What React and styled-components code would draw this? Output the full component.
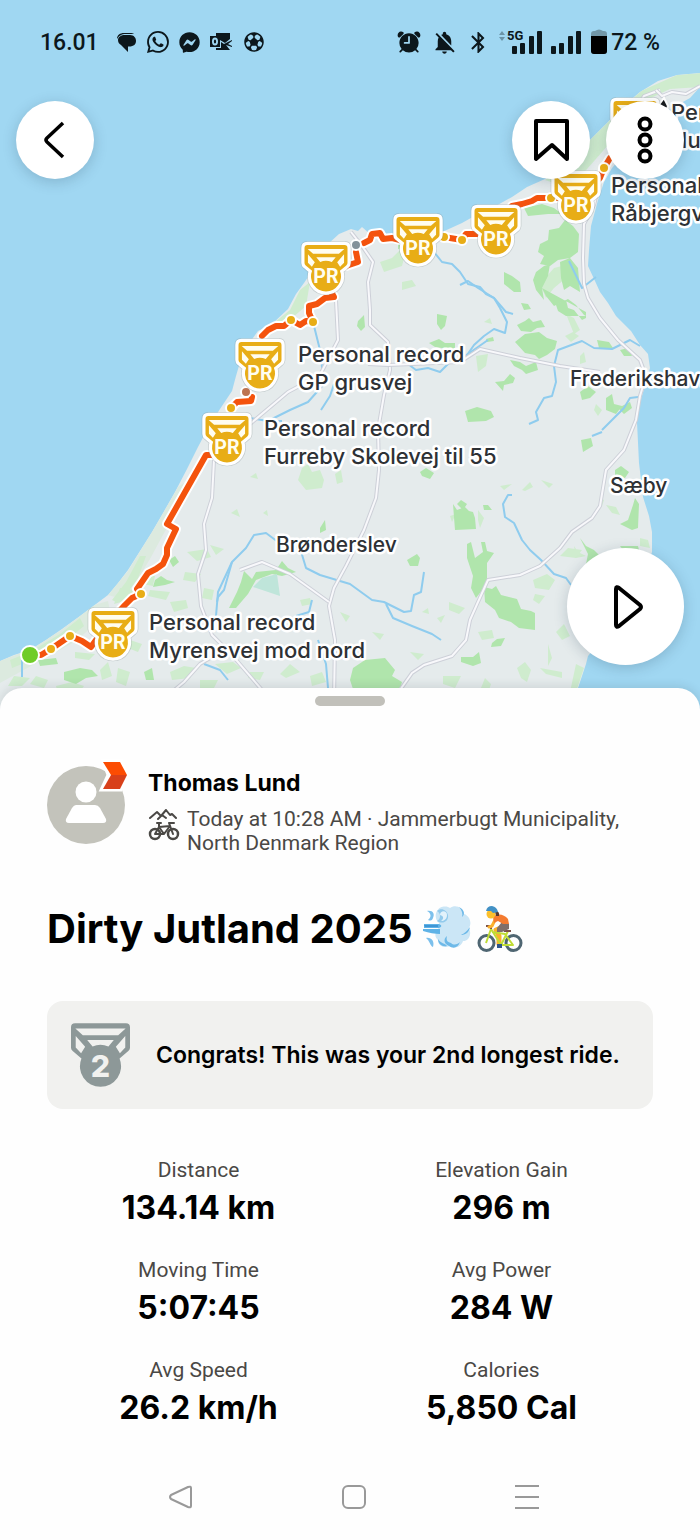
import React from "react";
import styled, { createGlobalStyle } from "styled-components";
import { BsWhatsapp } from "react-icons/bs";
import { FaFacebookMessenger } from "react-icons/fa";
import { IoFootball, IoAlarm } from "react-icons/io5";
import { MdNotificationsOff, MdBluetooth } from "react-icons/md";

const Global = createGlobalStyle`
  * { box-sizing: border-box; }
  body {
    margin: 0;
    background: #fefefe;
    color: #000;
    font-family: Inter, "Liberation Sans", sans-serif;
  }
  button { font: inherit; padding: 0; border: 0; cursor: pointer; }
  h1, h2, p, dl, dd { margin: 0; }
`;

/* ---------- map data ---------- */

const LAND =
  "M0 661 L14 655 L30 650 L46 640 L62 629 L80 616 L96 604 L108 595 L118 583 L128 570 L140 551 L152 532 L163 513 L175 492 L187 469 L198 447 L208 428 L220 409 L232 391 L236 376 L243 352 L258 331 L272 324 L288 309 L296 294 L304 283 L318 262 L328 244 L339 234 L351 229 L358 231 L362 227 L370 234 L384 236 L400 239 L440 233 L462 223 L478 214 L494 207 L512 197 L527 187 L545 179 L562 166 L590 140 L607 123 L622 107 L640 92 L658 81 L677 75 L700 73 L700 87 L690 98 L672 108 L650 122 L630 148 L612 168 L604 182 L598 200 L591 226 L589 250 L588 266 L595 281 L600 292 L608 303 L616 316 L631 331 L640 345 L648 354 L650 368 L645 386 L640 402 L637 422 L639 463 L643 497 L649 516 L652 532 L652 552 L640 590 L610 630 L588 656 L586 664 L578 688 L572 712 L0 712 Z";

const FORESTS = [
  "M549 230 l10 -2 l6 -8 l8 6 l6 8 l-1 18 l-8 6 l-12 2 l-8 6 l-10 -2 l4 -8 l-6 -4 l2 -8 l8 -4 z",
  "M536 272 l8 -6 l6 -2 l-2 12 l-6 12 l2 12 l-8 -10 l-3 -10 z",
  "M542 288 l4 8 l8 10 l4 -2 l8 -4 l2 8 l6 2 l8 10 l4 -2 l0 -6 z",
  "M556 305 l12 -6 l8 6 l8 10 l2 1 l-20 0 l-8 -5 z",
  "M560 262 l10 -4 l8 10 l2 24 l-10 -6 l-6 4 l-3 -12 z",
  "M504 272 l8 4 l8 6 l1 10 l-7 0 l-10 -8 z",
  "M521 303 l7 1 l3 5 l-7 1 z",
  "M517 325 l8 -4 l4 -3 l4 4 l8 -2 l4 7 l-8 1 l-6 4 l-10 -1 z",
  "M515 342 l10 -8 l14 -2 l8 6 l10 3 l-2 8 l-8 6 l-8 4 l-4 -4 l-10 -2 z",
  "M510 360 l10 2 l6 4 l10 -4 l2 8 l-12 4 l-4 -4 l-8 -4 z M486 339 l7 -2 l1 4 l-7 1 z",
  "M495 382 l9 -1 l6 -7 l5 4 l-2 5 l-9 2 l-1 6 z",
  "M465 411 l12 -4 l14 4 l3 6 l-8 4 l-18 1 z",
  "M597 340 l12 2 l4 6 l-14 0 z M620 350 l8 -2 l4 8 l-8 0 z",
  "M580 392 l8 -6 l8 6 l-6 6 l-8 2 z M606 398 l6 -4 l2 10 l8 2 l-6 8 l-10 -4 z M618 408 l12 -6 l2 6 l-8 6 z",
  "M524 208 l18 -4 l12 4 l8 6 l-14 0 l-20 2 z",
  "M398 243 l20 4 l-6 5 l-14 -3 z M358 321 l6 -6 l1 12 l-4 4 l-4 -5 z",
  "M437 314 l10 2 l-2 10 l-4 4 l-4 -6 z M429 343 l10 -4 l6 4 l10 0 l0 7 l-20 -3 z",
  "M453 504 l4 6 l8 -3 l4 4 l4 1 l2 6 l1 11 l-21 1 z M457 504 l4 -4 l6 4 l-4 6 z M483 505 l5 0 l4 5 l-8 0 z",
  "M467 544 l4 -2 l4 16 l8 -6 l-2 -10 l4 0 l2 9 l7 2 l-7 10 l0 16 l-4 10 l-7 9 l-5 -10 l2 -12 l-6 -18 z",
  "M484 587 l8 2 l4 -3 l5 9 l16 4 l4 10 l10 2 l4 2 l0 17 l-16 -2 l-8 -6 l-12 -4 l-4 -8 l-10 -8 z",
  "M580 538 l6 8 l8 4 l8 8 l-8 8 l-8 -2 l2 -10 z M620 546 l18 0 l2 8 l-14 0 z",
  "M633 505 l2 -7 l4 6 l-1 24 l-6 2 l-12 -6 l8 -4 z M615 470 l6 -4 l8 6 l-4 6 l-10 -2 z",
  "M353 668 l12 -8 l20 -2 l10 12 l-3 6 l10 6 l-2 8 l-46 2 l-4 -12 z",
  "M492 643 l5 -4 l8 -1 l-4 8 l-10 1 z M461 657 l12 0 l6 -5 l2 11 l-8 3 l-12 -4 z",
  "M244 571 l8 8 l4 -7 l20 -2 l6 -9 l6 7 l8 4 l-14 4 l-10 -2 l-16 6 l-8 14 l-12 14 l-7 0 l8 -16 l4 -10 z",
  "M320 528 l5 -8 l1 10 l-6 3 z M420 472 l6 -4 l8 5 l-4 6 l-8 -3 z",
  "M407 560 l10 -6 l3 4 l-2 8 l-8 0 z M581 440 l10 -2 l2 8 l-10 6 z",
  "M64 672 l16 -4 l12 2 l6 6 l-12 2 l-10 6 l-12 -4 z M38 660 l18 -2 l2 6 l-18 2 z",
  "M144 672 l8 -4 l2 12 l-8 0 z M169 560 l6 -4 l4 6 l-6 5 z M155 580 l6 -4 l6 4 l8 2 l-10 3 l-12 2 z",
];

const COAST_GRASS = [
  "M108 595 l20 -24 l34 -56 l16 -28 l6 -4 l-6 26 l-14 24 l-14 26 l-12 20 l-16 20 z",
  "M0 661 l26 -10 l34 -20 l34 -26 l14 -4 l2 10 l-34 30 l-36 20 l-40 22 z",
];

const MEADOWS = [
  "M112 600 l14 -18 l14 -26 l6 0 l-8 22 l-10 14 l-12 10 z M120 588 l14 2 l-6 10 l-14 4 z",
  "M256 338 l14 -12 l20 -16 l10 -20 l10 -8 l-4 24 l-14 12 l-12 8 l-10 2 z",
  "M10 660 l20 -8 l30 -18 l20 -16 l4 8 l-22 18 l-20 12 l-30 12 z",
  "M545 180 l18 -14 l44 -43 l34 -32 l36 -16 l23 -2 l0 14 l-30 2 l-30 14 l-30 40 l-30 34 l-20 8 z",
  "M540 284 l14 -16 l8 -2 l4 12 l-12 10 l-8 10 z M566 314 l8 4 l6 12 l-6 4 z M565 336 l8 -4 l6 4 l-8 6 z",
  "M380 262 l12 -4 l8 -8 l6 0 l-4 16 l-18 6 z M402 282 l10 -2 l4 6 l-14 4 z",
  "M476 356 l12 -2 l-2 12 l-8 6 z M484 322 l6 -4 l2 6 z M580 356 l4 -4 l2 10 l-6 2 z M596 404 l6 6 l-4 6 l-4 -6 z",
  "M298 480 l4 -12 l6 -4 l4 8 l8 -2 l4 10 l-2 8 l-16 2 z M335 474 l6 -4 l2 12 l-6 2 z M250 477 l6 -4 l2 6 z",
  "M231 513 l6 -4 l3 8 z M263 513 l4 -3 l1 6 z M187 552 l20 -3 l4 8 l-14 4 z M210 545 l14 4 l-8 6 z",
  "M522 490 l8 -8 l3 5 l-8 4 z M541 480 l12 4 l-4 4 z M500 486 l12 -2 l-8 6 z",
  "M533 580 l14 -6 l8 6 l-6 10 l-14 -2 z M535 594 l10 2 l-6 8 l-6 -4 z M560 556 l8 -8 l14 2 l-6 8 z",
  "M449 602 l16 6 l-6 6 l-10 -4 z M422 612 l6 -4 l1 6 z M437 618 l8 -3 l-4 8 z M478 632 l14 -2 l2 8 l-12 2 z",
  "M517 668 l8 -6 l6 8 l-4 12 l-6 -4 z M540 668 l22 4 l0 6 l-16 -4 z M556 632 l8 -8 l6 12 l-8 4 z",
  "M443 676 l18 0 l-6 12 l-12 -4 z M485 678 l6 6 l-2 6 l-8 -2 z M576 664 l8 4 l-8 24 l-6 0 z",
  "M606 505 l10 2 l4 8 l-8 -2 z M640 538 l8 2 l2 8 l-10 -2 z M604 500 l-4 -2 l2 8 z",
  "M145 574 l10 2 l-2 10 l-10 -2 z M150 590 l20 2 l-4 8 l-18 -4 z M185 572 l16 2 l-6 8 l-12 -2 z",
  "M100 670 l8 -8 l4 14 l-10 4 z M118 668 l12 4 l-4 14 l-10 -4 z M75 652 l20 2 l-6 6 l-14 -2 z",
  "M14 676 l16 2 l-8 8 l-14 0 z M36 676 l12 4 l-4 8 l-14 -4 z M56 686 l16 -4 l12 4 l-6 8 l-20 0 z",
  "M170 672 l14 -6 l12 2 l-6 10 l-18 2 z M215 664 l18 -2 l8 6 l-14 6 z M250 672 l14 0 l-4 8 l-12 -2 z",
  "M170 602 l16 -2 l2 8 l-14 4 z M204 588 l10 2 l-2 10 l-10 -2 z M290 664 l10 8 l-14 6 l-6 -4 z",
  "M340 612 l10 4 l-4 6 z M300 600 l10 -2 l2 6 l-10 2 z M372 632 l12 2 l-4 6 z M410 652 l14 2 l-6 6 z",
  "M130 640 l12 4 l-4 8 l-10 -4 z M200 680 l18 0 l-4 8 l-14 0 z M310 676 l12 -4 l4 10 l-14 4 z",
  "M574 546 l4 6 l8 4 l-10 2 z M478 510 l6 8 l-4 10 l-2 -8 z M456 514 l-4 8 l-2 -6 z M548 644 l4 14 l-4 8 z",
];

const RIVERS = [
  "M434 252 L442 262 L452 264 L460 272 L468 284 L480 287 L486 294 L494 298 L506 312 L513 314",
  "M460 285 L468 281 L478 288 L494 298 L500 308 L507 322 L505 333 L494 329 L484 336 L474 345 L465 358",
  "M408 364 L416 370 L428 368 L440 372 L452 360 L465 356 L488 340",
  "M569 261 L582 288 L596 277",
  "M529 424 L538 420 L536 412 L544 398 L552 396 L556 382 L554 366 L558 350 L582 341 L594 348 L612 349 L630 340 L640 346",
  "M602 430 L612 420 L624 408 L630 398 L638 397",
  "M592 436 L602 432",
  "M512 495 L508 495 L503 504 L505 517 L514 523 L522 540 L530 550 L541 560 L554 574 L566 578 L571 585",
  "M217 602 L218 597 L224 590 L232 562 L246 548 L254 535 L266 533 L278 542 L300 548 L306 568 L320 575 L350 584 L372 600 L384 602 L404 612 L411 611 L414 595 L421 592 L424 572",
  "M386 604 L393 618 L412 626 L432 634 L441 640",
  "M232 562 L218 592 L216 616",
  "M204 664 L220 670 L228 680",
  "M313 322 L320 350 L324 384 L308 402 L290 410 L268 421",
  "M321 410 L330 396 L334 384",
  "M312 600 L309 612 L296 616",
  "M318 640 L326 664 L329 700",
  "M22 660 L22 677",
  "M250 418 L268 421 L282 421",
];

const ROADS = [
  "M351 232 L362 246 L373 262 L368 282 L370 310 L370 325 L388 342 L390 370 L384 395 L378 430 L379 470 L376 498 L364 530 L346 566 L334 588 L329 606 L335 640 L334 700",
  "M332 262 L336 300 L338 340 L320 375 L288 392 L250 424 L214 460 L212 498 L204 524 L206 550 L198 574 L201 606 L212 635 L232 655 L262 690",
  "M368 364 L388 365 L460 362 L480 349 L520 358 L560 366 L600 372",
  "M660 90 L644 96 L630 118 L612 148 L600 180 L594 205 L584 224 L583 258 L584 284 L588 298 L600 318 L618 340 L640 360 L646 376 L640 396 L636 420 L624 450 L606 470 L600 506 L592 518 L572 532 L560 548 L540 566 L520 575 L488 580 L478 602 L470 620 L466 640 L452 656 L424 665 L412 673 L400 690",
  "M329 602 L290 574 L262 562 L240 570",
  "M700 86 L686 94 L672 92 L662 96 L656 90",
  "M172 692 L184 682 L200 664 L220 652",
];

const ROUTE = [
  "M30 655 L41 655 L51 649 L70 636 L82 641 L91 647 L96 640 L113 618 L125 605 L132 598 L141 594 L137 589 L148 573 L156 569 L163 564 L167 555 L167 548 L176 529 L167 524 L206 455 L214 455",
  "M231 408 L237 402 L251 401 L252 397",
  "M262 336 L268 330 L276 326 L284 326 L291 320 L300 325 L306 321 L313 322 L309 313 L309 306 L317 304 L325 298 L334 297 L330 290",
  "M346 266 L358 262 L356 252",
  "M364 243 L370 240 L372 234 L380 233 L383 239 L392 238 L400 240 L412 240",
  "M444 237 L462 240 L466 234 L482 234",
  "M512 206 L522 204 L532 201 L537 198 L551 198 L560 198",
  "M590 188 L600 178 L604 168 L610 158",
];

const CHECKPOINTS = [
  { x: 51, y: 649 }, { x: 70, y: 636 }, { x: 141, y: 594 }, { x: 231, y: 408 },
  { x: 291, y: 320 }, { x: 313, y: 322 }, { x: 444, y: 237 }, { x: 462, y: 240 },
  { x: 551, y: 198 }, { x: 604, y: 168 },
  { x: 246, y: 392, tone: "#bd7350" }, { x: 356, y: 245, tone: "#83929a" },
];

const RECORD_PINS = [
  [635, 101], [576, 174], [496, 208], [418, 217], [326, 245], [260, 342], [227, 416], [113, 611],
];

const PLACE_LABELS = [
  { x: 298, y: 362, lines: ["Personal record", "GP grusvej"] },
  { x: 264, y: 436, lines: ["Personal record", "Furreby Skolevej til 55"] },
  { x: 149, y: 630, lines: ["Personal record", "Myrensvej mod nord"] },
  { x: 611, y: 193, lines: ["Personal record", "Råbjergvej"] },
  { x: 671, y: 120, lines: ["Personal", "Hulsig"] },
];

const TOWNS = [
  { x: 570, y: 386, name: "Frederikshavn" },
  { x: 610, y: 493, name: "Sæby" },
  { x: 276, y: 552, name: "Brønderslev" },
];

/* ---------- medal, shared by the pins and the achievement card ---------- */

const MEDAL_OUTLINE =
  "M12 0 H163 Q175 0 175 12 V73 Q175 79 170 83 L144 105 A61 61 0 1 1 31 105 L5 83 Q0 79 0 73 V12 Q0 0 12 0 Z";
const MEDAL_CUTS =
  "M13 16 H162 L140 36 H35 Z M48 50 H127 L111 69 Q87 59 64 69 Z M14 38 L42 70 L30 89 L14 72 Z M161 38 L133 70 L145 89 L161 72 Z";

const Medal = ({ color, cut, children }) => (
  <>
    <path d={MEDAL_OUTLINE} fill={color} />
    <path d={MEDAL_CUTS} fill={cut} />
    {children}
  </>
);

const MapSvg = styled.svg`
  position: absolute;
  inset: 0;
  width: 100%;
  height: 100%;
  display: block;
`;

const MapText = styled.text`
  font-family: Inter, "Liberation Sans", sans-serif;
  font-size: ${(p) => (p.$town ? 21 : 22)}px;
  font-weight: ${(p) => (p.$town ? 450 : 500)};
  fill: #2e3135;
  stroke: #fff;
  stroke-width: 5px;
  stroke-linejoin: round;
  paint-order: stroke;
`;

const PinText = styled.text`
  font-family: "Liberation Sans Narrow", Roboto, sans-serif;
  font-size: 80px;
  font-weight: 700;
  fill: #fffdf0;
  text-anchor: middle;
`;

const RouteMap = () => (
  <MapSvg viewBox="0 0 700 712" preserveAspectRatio="xMidYMin slice" role="img" aria-label="Route map">
    <defs>
      <clipPath id="land"><path d={LAND} /></clipPath>
    </defs>
    <rect x="-700" width="2100" height="1400" fill="#a0d7f2" />
    <path d={LAND} fill="#e5ebec" />
    <g clipPath="url(#land)">
      <path d={COAST_GRASS.join(" ")} fill="#dceadf" />
      <path d={MEADOWS.join(" ")} fill="#cfecce" />
      <path d={FORESTS.join(" ")} fill="#b0e5ac" />
      <path d="M253 587 L262 578 L277 574 L280 596 Z" fill="#bfe5da" />
    </g>
    <g fill="none" stroke="#8fccee" strokeWidth="2" strokeLinejoin="round">
      {RIVERS.map((d) => <path key={d} d={d} />)}
    </g>
    <g fill="none" strokeLinejoin="round">
      {ROADS.map((d) => (
        <g key={d}>
          <path d={d} stroke="#cdd0d8" strokeWidth="4" />
          <path d={d} stroke="#f8f8fb" strokeWidth="2" />
        </g>
      ))}
    </g>
    <g fill="none" strokeLinejoin="round" strokeLinecap="round">
      {ROUTE.map((d) => <path key={d} d={d} stroke="#fff" strokeWidth="10" />)}
      {ROUTE.map((d) => <path key={d} d={d} stroke="#f4530d" strokeWidth="6" />)}
    </g>
    {CHECKPOINTS.map((c) => (
      <circle key={`${c.x}-${c.y}`} cx={c.x} cy={c.y} r="5" fill={c.tone || "#e8ad16"} stroke="#fff" strokeWidth="2" />
    ))}
    <circle cx="30" cy="655" r="9" fill="#70cc28" stroke="#fff" strokeWidth="2" />
    <path d="M658 106 L664 98 L668 106 L666 112 Z" fill="#16191b" stroke="#fff" strokeWidth="2" />
    {TOWNS.map((t) => (
      <MapText key={t.name} x={t.x} y={t.y} $town>{t.name}</MapText>
    ))}
    {PLACE_LABELS.map((l) => (
      <MapText key={l.lines[1]} x={l.x} y={l.y}>
        <tspan x={l.x}>{l.lines[0]}</tspan>
        <tspan x={l.x} dy="28">{l.lines[1]}</tspan>
      </MapText>
    ))}
    {RECORD_PINS.map(([x, y]) => (
      <g key={x} transform={`translate(${x - 21.5} ${y}) scale(0.2457)`}>
        <path d={MEDAL_OUTLINE} fill="#fff" stroke="#8a9499" strokeOpacity="0.35" strokeWidth="32" strokeLinejoin="round" />
        <path d={MEDAL_OUTLINE} fill="#fff" stroke="#fff" strokeWidth="26" strokeLinejoin="round" />
        <Medal color="#e8ad16" cut="#fffdf0">
          <PinText x="87" y="155">PR</PinText>
        </Medal>
      </g>
    ))}
  </MapSvg>
);

/* ---------- top of the screen ---------- */

const Screen = styled.div`
  min-height: 100vh;
  display: flex;
  flex-direction: column;
`;

const Hero = styled.section`
  position: relative;
  min-height: 712px;
  display: flex;
  flex-direction: column;
  overflow: hidden;
`;

const StatusBar = styled.div`
  position: relative;
  display: flex;
  justify-content: space-between;
  align-items: center;
  height: 84px;
  padding: 0 40px;
  font-family: Roboto, sans-serif;
  font-size: 23px;
  font-weight: 500;
  color: #0c171c;
`;

const StatusGroup = styled.div`
  display: flex;
  align-items: center;
  gap: ${(p) => p.$gap || 8}px;
  svg { display: block; flex: none; }
`;

const Clock = styled.span`
  margin-right: 8px;
`;

const BatteryText = styled.span`
  margin-left: -4px;
`;

const Toolbar = styled.nav`
  position: relative;
  display: flex;
  justify-content: space-between;
  padding: 17px 16px 0;
`;

const ToolGroup = styled.div`
  display: flex;
  gap: 16px;
`;

const RoundButton = styled.button`
  width: ${(p) => p.$size || 78}px;
  height: ${(p) => p.$size || 78}px;
  display: grid;
  place-items: center;
  border-radius: 50%;
  background: #fff;
  box-shadow: 0 3px 14px rgba(30, 60, 80, 0.22);
  svg { display: block; }
`;

const PlayRow = styled.div`
  position: relative;
  display: flex;
  justify-content: flex-end;
  margin-top: auto;
  padding: 0 16px 47px;
`;

const StatusIcons = () => (
  <StatusGroup $gap={10}>
    <Clock>16.01</Clock>
    <svg width="20" height="20" viewBox="0 0 20 20" fill="currentColor">
      <path d="M0 7 C0 3 3 1 7 1 H13 C15 1 16 1.400 17 2 H9 C4 2 2 4 0 7 Z" />
      <path d="M8 3 H13 C17 3 19 6 19 9 C19 12 17 14.500 12 14.500 H11 V20 L4 13 C2 12 1 10 1 8 C1 5 4 3 8 3 Z" />
    </svg>
    <BsWhatsapp size={22} />
    <FaFacebookMessenger size={21} />
    <svg width="22" height="20" viewBox="0 0 22 20" fill="currentColor">
      <path d="M6 1 H20 V7 L15 11 L10 8 V4 H6 Z" />
      <path fillRule="evenodd" d="M0 4 H10 V15 H0 Z M5 5.500 C3 5.500 2 7 2 9.500 C2 12 3 13.500 5 13.500 C7 13.500 8 12 8 9.500 C8 7 7 5.500 5 5.500 Z M5 7.500 C5.800 7.500 6.100 8.500 6.100 9.500 C6.100 10.500 5.800 11.500 5 11.500 C4.200 11.500 3.900 10.500 3.900 9.500 C3.900 8.500 4.200 7.500 5 7.500 Z" />
      <path d="M11 10 L14 12 L22 8 V9 L18 12 L22 14 V15 L16 13 L20 18 H6 V16 H11 Z" />
    </svg>
    <IoFootball size={24} />
  </StatusGroup>
);

const SignalBars = ({ label }) => (
  <svg width={label ? 44 : 32} height="26" viewBox={label ? "0 0 44 26" : "13 0 32 26"} fill="currentColor">
    {label && (
      <>
        <path d="M0 6 L3 2 L6 6 Z M0 8 H6 L3 12 Z" opacity="0.35" />
        <text x="8" y="11" fontFamily="Roboto, sans-serif" fontSize="13" fontWeight="700">{label}</text>
      </>
    )}
    <rect x="13" y="17" width="5" height="8" rx="1" />
    <rect x="21" y="14" width="5" height="11" rx="1" />
    <rect x="30" y="7" width="5" height="18" rx="1" />
    <rect x="38" y="2" width="5" height="23" rx="1" />
  </svg>
);

const SystemIcons = () => (
  <StatusGroup>
    <IoAlarm size={28} />
    <MdNotificationsOff size={27} />
    <MdBluetooth size={25} />
    <SignalBars label="5G" />
    <SignalBars />
    <svg width="16" height="26" viewBox="0 0 16 26">
      <path d="M4 2 Q8 -1 12 2 H13 Q16 2 16 5 V22 Q16 25 13 25 H3 Q0 25 0 22 V5 Q0 2 3 2 Z" fill="#7297a8" />
      <path d="M0 7 H16 V22 Q16 25 13 25 H3 Q0 25 0 22 Z" fill="#000" />
    </svg>
    <BatteryText>72 %</BatteryText>
  </StatusGroup>
);

/* ---------- activity sheet ---------- */

const Sheet = styled.main`
  position: relative;
  flex: 1;
  display: flex;
  flex-direction: column;
  margin-top: -24px;
  padding: 8px 47px 29px;
  border-radius: 22px 22px 0 0;
  background: #fefefe;
  box-shadow: 0 -2px 10px rgba(30, 50, 60, 0.12);
`;

const Handle = styled.div`
  align-self: center;
  width: 70px;
  height: 10px;
  border-radius: 5px;
  background: #c1c0ba;
`;

const Athlete = styled.header`
  display: flex;
  gap: 23px;
  margin-top: 56px;
`;

const Avatar = styled.svg`
  flex: none;
  display: block;
  width: 78px;
  height: 86px;
  overflow: visible;
`;

const AthleteName = styled.h2`
  font-size: 23px;
  line-height: 32px;
  font-weight: 700;
  margin: 5px 0 8px;
`;

const MetaRow = styled.div`
  display: flex;
  gap: 7px;
  color: #4a4845;
  font-family: Roboto, "Liberation Sans", sans-serif;
  font-size: 21px;
  line-height: 24px;
  svg { flex: none; display: block; margin-top: 2px; }
`;

const Title = styled.h1`
  display: flex;
  align-items: center;
  gap: 10px;
  margin-top: 48px;
  font-size: 40px;
  line-height: 52px;
  font-weight: 700;
  svg { display: block; }
`;

const Emojis = styled.span`
  display: flex;
  gap: 6px;
`;

const Achievement = styled.section`
  display: flex;
  align-items: center;
  gap: 26px;
  min-height: 108px;
  margin-top: 46px;
  padding: 20px 16px 20px 24px;
  border-radius: 16px;
  background: #f1f1ef;
  font-size: 23px;
  font-weight: 600;
  svg { flex: none; display: block; }
`;

const Stats = styled.dl`
  display: grid;
  grid-template-columns: 1fr 1fr;
  row-gap: 28px;
  margin-top: 47px;
  text-align: center;
`;

const StatLabel = styled.dt`
  font-family: Roboto, "Liberation Sans", sans-serif;
  font-size: 21px;
  line-height: 28px;
  color: #4a4845;
`;

const StatValue = styled.dd`
  font-size: 32px;
  line-height: 40px;
  font-weight: 700;
  padding-top: 4px;
`;

const SystemNav = styled.nav`
  display: flex;
  justify-content: center;
  gap: 145px;
  margin-top: auto;
  padding: 44px 0 0 8px;
`;

const NavButton = styled.button`
  width: 28px;
  height: 28px;
  background: none;
  color: #999;
  svg { display: block; }
`;

const STATS = [
  ["Distance", "134.14 km"],
  ["Elevation Gain", "296 m"],
  ["Moving Time", "5:07:45"],
  ["Avg Power", "284 W"],
  ["Avg Speed", "26.2 km/h"],
  ["Calories", "5,850 Cal"],
];

const AthleteAvatar = () => (
  <Avatar viewBox="0 0 78 86">
    <circle cx="39" cy="43" r="39" fill="#c3c3bb" />
    <circle cx="39" cy="30" r="10.500" fill="#fff" />
    <path d="M29 43 H48 Q51 43 53 46 L59 57 Q60 61 56 61 H22 Q18 61 19 57 L25 46 Q27 43 29 43 Z" fill="#fff" />
    <path d="M56 -1 H75 L81 13 L74 28 H54 L61 13 Z" fill="#fff" stroke="#fff" strokeWidth="3" />
    <path d="M56 0 H73 L80 13 H64 Z" fill="#fc4c02" />
    <path d="M64 13 H80 L73 27 H56 Z" fill="#d8401a" />
  </Avatar>
);

const GravelBike = () => (
  <svg width="32" height="32" viewBox="0 0 32 32" fill="none" stroke="currentColor" strokeWidth="2" strokeLinejoin="round" strokeLinecap="round">
    <path d="M2 9 L9 3 L13 7 L18 1 L22 6 L24 5 L28 9 M10 10 L14 6 L18 9" />
    <circle cx="7" cy="25" r="5" strokeWidth="2.500" />
    <circle cx="25" cy="25" r="5" strokeWidth="2.500" />
    <path d="M7 25 L11 18 L22 17 L16 25 L11 18 M7 25 H16 M9 14 H13 M11 18 L11 14 M25 25 L21 14 H26" />
  </svg>
);

const WindEmoji = () => (
  <svg width="48" height="46" viewBox="0 0 48 46">
    <path d="M14 6 C17 0 25 1 27 3 C32 -1 40 2 41 9 C47 11 49 18 46 23 C49 29 46 36 40 36 C38 42 32 44 27 41 C20 44 15 40 15 35 C11 31 12 28 15 25 L16 18 C12 15 12 9 14 6 Z" fill="#cbe6f6" />
    <path d="M14 6 C18 8 18 14 14 16 C20 20 26 16 25 10 C24 5 18 2 14 6 Z" fill="#92caec" />
    <path d="M17 10 C17 5 24 5 24 10 C24 14 21 16 18 16 C21 14 21 11 17 10 Z" fill="#e2f2fb" />
    <path d="M36 2 C42 5 42 10 39 12 C40 9 39 5 36 2 Z M47 22 C46 28 42 30 38 30 C42 28 44 26 47 22 Z M26 41 C21 39 20 34 24 31 C23 35 24 37 28 38 C31 41 35 39 37 37 C35 43 30 44 26 41 Z M15 34 C18 39 22 38 24 41 C19 42 15 39 15 34 Z" fill="#6eb9e8" />
    <path d="M1 19 H16 C19 20 19 22 16 23 H1 Z M0 24 H17 V29 C12 29 6 28 0 26 Z" fill="#5fb3e7" />
    <path d="M1 20 H15 V22 H2 Z" fill="#3f96d5" />
    <path d="M4 6 C10 5 12 9 10 13 C9 16 7 16 5 15 C9 12 8 8 4 6 Z M3 33 C8 32 12 36 10 42 C7 41 7 36 3 33 Z" fill="#7cc0ec" />
  </svg>
);

const CyclistEmoji = () => (
  <svg width="46" height="48" viewBox="0 0 46 48" fill="none">
    <g stroke="#4f6672" strokeWidth="3">
      <circle cx="9.500" cy="38" r="7.500" />
      <circle cx="36.500" cy="38" r="7.500" />
    </g>
    <path d="M26 22 L19 25 L22 31 L22 39" stroke="#fbb02d" strokeWidth="5" strokeLinecap="round" strokeLinejoin="round" />
    <path d="M9 38 L14 24 L24 40 H36 L28 29 L15 27 M24 40 L31 26" stroke="#c0dc35" strokeWidth="2" strokeLinejoin="round" />
    <path d="M9 21 H14 V24 M27 26 H34" stroke="#7c5148" strokeWidth="2" />
    <path d="M18 15 L15 21 L12 22" stroke="#fbb02d" strokeWidth="3" strokeLinecap="round" />
    <path d="M25 17 L32 19 L32 24 L25 27 L20 27 L20 23 Z" fill="#806f6a" />
    <path d="M16 12 C20 8 27 9 31 14 L32 19 L26 19 L21 16 L17 18 Z" fill="#f47b30" />
    <circle cx="14" cy="9" r="4.500" fill="#fbc02d" />
    <path d="M18 6 Q23 6 22 11 L19 11 Z" fill="#543930" />
    <path d="M9 6 Q10 1 15 1 Q20 2 21 7 L16 8 L14 6 Z" fill="#4291c5" />
    <path d="M20 39 H25 V43 H20 Z" fill="#2f5589" />
  </svg>
);

export default function App() {
  return (
    <>
      <Global />
      <Screen>
        <Hero>
          <RouteMap />
          <StatusBar>
            <StatusIcons />
            <SystemIcons />
          </StatusBar>
          <Toolbar>
            <RoundButton aria-label="Back">
              <svg width="40" height="40" viewBox="0 0 40 40" fill="none" stroke="#000" strokeWidth="3.500" strokeLinejoin="round">
                <path d="M28 3 L12 18 Q10 20 12 22 L28 37" />
              </svg>
            </RoundButton>
            <ToolGroup>
              <RoundButton aria-label="Save">
                <svg width="40" height="46" viewBox="0 0 40 46" fill="none" stroke="#000" strokeWidth="4" strokeLinejoin="round">
                  <path d="M5 4 H36 V42 L21 28 L5 42 Z" />
                </svg>
              </RoundButton>
              <RoundButton aria-label="More options">
                <svg width="18" height="50" viewBox="0 0 18 50" fill="none" stroke="#000" strokeWidth="4">
                  <circle cx="9" cy="9" r="5.500" />
                  <circle cx="9" cy="25" r="5.500" />
                  <circle cx="9" cy="41" r="5.500" />
                </svg>
              </RoundButton>
            </ToolGroup>
          </Toolbar>
          <PlayRow>
            <RoundButton $size={117} aria-label="Play route">
              <svg width="34" height="46" viewBox="0 0 34 46" fill="none" stroke="#000" strokeWidth="4" strokeLinejoin="round">
                <path d="M7 5 Q7 2 10 4 L31 21 Q33 23 31 25 L10 42 Q7 44 7 41 Z" />
              </svg>
            </RoundButton>
          </PlayRow>
        </Hero>
        <Sheet>
          <Handle />
          <Athlete>
            <AthleteAvatar />
            <div>
              <AthleteName>Thomas Lund</AthleteName>
              <MetaRow>
                <GravelBike />
                <p>Today at 10:28 AM · Jammerbugt Municipality, North Denmark Region</p>
              </MetaRow>
            </div>
          </Athlete>
          <Title>
            Dirty Jutland 2025
            <Emojis role="img" aria-label="Wind and cyclist">
              <WindEmoji />
              <CyclistEmoji />
            </Emojis>
          </Title>
          <Achievement>
            <svg width="59" height="64" viewBox="0 0 175 189">
              <Medal color="#8d9898" cut="#f1f1ef">
                <text x="87" y="160" fill="#f1f1ef" fontSize="90" fontWeight="800" textAnchor="middle">2</text>
              </Medal>
            </svg>
            <p>Congrats! This was your 2nd longest ride.</p>
          </Achievement>
          <Stats>
            {STATS.map(([label, value]) => (
              <div key={label}>
                <StatLabel>{label}</StatLabel>
                <StatValue>{value}</StatValue>
              </div>
            ))}
          </Stats>
          <SystemNav>
            <NavButton aria-label="System back">
              <svg width="28" height="28" viewBox="0 0 28 28" fill="none" stroke="currentColor" strokeWidth="2" strokeLinejoin="round">
                <path d="M21 4 Q24 3 24 5 V23 Q24 25 21 24 L4 16 Q2 14 4 12 Z" />
              </svg>
            </NavButton>
            <NavButton aria-label="Home">
              <svg width="28" height="28" viewBox="0 0 28 28" fill="none" stroke="currentColor" strokeWidth="2">
                <rect x="3" y="3" width="22" height="22" rx="5" />
              </svg>
            </NavButton>
            <NavButton aria-label="Recent apps">
              <svg width="28" height="28" viewBox="0 0 28 28" fill="none" stroke="currentColor" strokeWidth="2">
                <path d="M2 3 H26 M2 14 H26 M2 25 H26" />
              </svg>
            </NavButton>
          </SystemNav>
        </Sheet>
      </Screen>
    </>
  );
}
